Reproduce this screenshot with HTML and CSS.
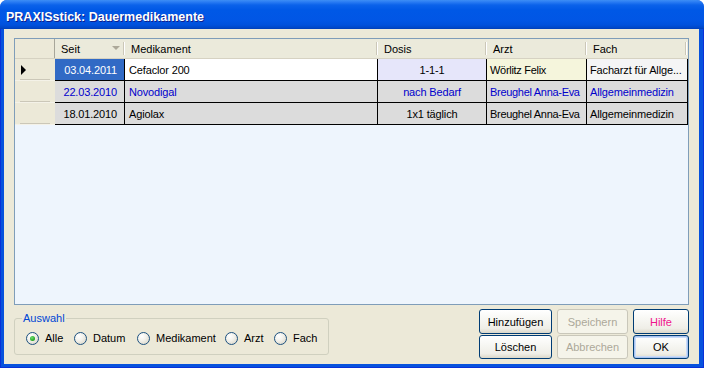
FILE: index.html
```html
<!DOCTYPE html>
<html>
<head>
<meta charset="utf-8">
<link rel="stylesheet" href="styles.css">
</head>
<body>
<div class="window">
  <div class="titlebar">PRAXISstick: Dauermedikamente</div>
  <div class="frame">
    <div class="client">
      <div class="grid">
        <div class="row head">
          <div class="hc corner"></div>
          <div class="hc seit"><span>Seit</span><span class="sort"></span></div>
          <div class="hc">Medikament</div>
          <div class="hc">Dosis</div>
          <div class="hc">Arzt</div>
          <div class="hc last">Fach</div>
        </div>
        <div class="row r1">
          <div class="rh"><span class="pointer"></span></div>
          <div class="c date sel">03.04.2011</div>
          <div class="c med">Cefaclor 200</div>
          <div class="c dose">1-1-1</div>
          <div class="c arzt">Wörlitz Felix</div>
          <div class="c fach">Facharzt für Allge...</div>
        </div>
        <div class="row gray blue">
          <div class="rh"></div>
          <div class="c date">22.03.2010</div>
          <div class="c med">Novodigal</div>
          <div class="c dose">nach Bedarf</div>
          <div class="c arzt">Breughel Anna-Eva</div>
          <div class="c fach">Allgemeinmedizin</div>
        </div>
        <div class="row gray">
          <div class="rh"></div>
          <div class="c date">18.01.2010</div>
          <div class="c med">Agiolax</div>
          <div class="c dose">1x1 täglich</div>
          <div class="c arzt">Breughel Anna-Eva</div>
          <div class="c fach">Allgemeinmedizin</div>
        </div>
      </div>
      <div class="bottom">
        <fieldset class="group">
          <legend>Auswahl</legend>
          <div class="radios">
            <label class="opt"><span class="radio on"></span>Alle</label>
            <label class="opt"><span class="radio"></span>Datum</label>
            <label class="opt"><span class="radio"></span>Medikament</label>
            <label class="opt"><span class="radio"></span>Arzt</label>
            <label class="opt"><span class="radio"></span>Fach</label>
          </div>
        </fieldset>
        <div class="btns">
          <button class="btn">Hinzufügen</button>
          <button class="btn dis">Speichern</button>
          <button class="btn help">Hilfe</button>
          <button class="btn">Löschen</button>
          <button class="btn dis">Abbrechen</button>
          <button class="btn def">OK</button>
        </div>
      </div>
    </div>
  </div>
</div>
</body>
</html>
```
FILE: styles.css
```css
html, body {
  margin: 0;
  padding: 0;
}
body {
  width: 704px;
  height: 368px;
  overflow: hidden;
  background: #ffffff;
  font-family: "Liberation Sans", Arial, sans-serif;
  font-size: 11px;
  color: #000;
}
.window {
  width: 704px;
  height: 368px;
  display: flex;
  flex-direction: column;
  border-radius: 7px 7px 0 0;
  overflow: hidden;
  background: #0a52de;
}
.titlebar {
  height: 29px;
  box-sizing: border-box;
  padding: 7px 0 0 6px;
  line-height: 20px;
  font-size: 12.5px;
  font-weight: bold;
  color: #fff;
  text-shadow: 1px 1px 0 #0f1f8c;
  background: linear-gradient(to bottom, #3d8ef5 0px, #2a7cf3 2px, #0b62ea 5px, #0058e6 10px, #0156e5 20px, #0051dc 25px, #0046c6 28px, #003db4 29px);
}
.frame {
  flex: 1;
  display: flex;
  padding: 0 5px 4px 4px;
  background: #0752dd;
  box-shadow: inset 1px 0 #0831d9, inset -1px 0 #0831d9, inset 0 -1px #0831d9;
}
.client {
  flex: 1;
  display: flex;
  flex-direction: column;
  padding: 9px 10px 0 10px;
  background: #ece9d8;
}
.grid {
  height: 267px;
  box-sizing: border-box;
  border: 1px solid #7f9db9;
  background: #eef5fd;
}
.row {
  display: grid;
  grid-template-columns: 40px 70px 253px 109px 100px 101px;
  height: 22px;
}
.row.head {
  height: 20px;
  background: #ebeadb;
  border-bottom: 1px solid #d6d2c2;
  box-sizing: border-box;
}
.hc {
  box-sizing: border-box;
  padding: 1px 0 0 6px;
  line-height: 18px;
  white-space: nowrap;
  background: linear-gradient(#cbc7b8, #cbc7b8) right 1px top 3px / 1px 13px no-repeat,
              linear-gradient(#ffffff, #ffffff) right 0 top 3px / 1px 13px no-repeat;
}
.hc.corner {
  background: #ece9d8;
  border-right: 1px solid #a7a69a;
}
.hc.seit {
  display: flex;
  justify-content: space-between;
  align-items: center;
  padding-right: 5px;
}
.hc.seit span:first-child {
  line-height: 18px;
}
.sort {
  width: 0;
  height: 0;
  border-left: 4px solid transparent;
  border-right: 4px solid transparent;
  border-top: 4px solid #aca899;
  margin-top: -2px;
}
.hc.last {
  background: linear-gradient(#cbc7b8, #cbc7b8) right 2px top 3px / 1px 13px no-repeat,
              linear-gradient(#ffffff, #ffffff) right 1px top 3px / 1px 13px no-repeat;
}
.rh {
  background: #ece9d8 linear-gradient(#cbc7b8, #cbc7b8) center bottom 1px / 30px 1px no-repeat;
  box-shadow: inset 0 -1px #f4f2e8;
  display: flex;
  align-items: center;
  padding-left: 6px;
}
.pointer {
  width: 0;
  height: 0;
  border-left: 5px solid #000;
  border-top: 5px solid transparent;
  border-bottom: 5px solid transparent;
}
.c {
  box-sizing: border-box;
  border-right: 1px solid #000;
  border-bottom: 1px solid #000;
  padding-top: 2px;
  line-height: 19px;
  white-space: nowrap;
  overflow: hidden;
  letter-spacing: -0.15px;
}
.date {
  text-align: right;
  padding-right: 7px;
}
.med {
  padding-left: 4px;
}
.dose {
  text-align: center;
}
.arzt, .fach {
  padding-left: 3px;
}
.arzt {
  letter-spacing: -0.3px;
}
.r1 .med { background: #ffffff; }
.r1 .sel { background: #316ac5; color: #fff; }
.r1 .dose { background: #e6e6fa; }
.r1 .arzt { background: #f5f5dc; }
.r1 .fach { background: #f5f5f5; }
.gray .c { background: #dcdcdc; }
.blue .c { color: #0000cc; }
.bottom {
  display: flex;
  justify-content: space-between;
  align-items: flex-start;
  margin-top: 4px;
}
.group {
  margin: 3px 0 0 0;
  width: 315px;
  height: 43px;
  box-sizing: border-box;
  border: 1px solid #d0d0bf;
  border-radius: 3px;
  padding: 7px 0 0 11px;
}
.group legend {
  color: #0046d5;
  padding: 0 1px;
  margin-left: -4px;
  line-height: 13px;
}
.radios {
  display: grid;
  grid-template-columns: 48px 63px 88px 49px auto;
  align-items: center;
}
.opt {
  display: flex;
  align-items: center;
  gap: 6px;
  line-height: 13px;
}
.radio {
  width: 13px;
  height: 13px;
  box-sizing: border-box;
  border: 1px solid #1c5180;
  border-radius: 50%;
  background: radial-gradient(circle at 35% 30%, #ffffff 0, #f3f2ec 40%, #d4d0c0 100%);
  display: flex;
  align-items: center;
  justify-content: center;
}
.radio.on::before {
  content: "";
  width: 5px;
  height: 5px;
  border-radius: 50%;
  background: radial-gradient(circle at 40% 35%, #6fe06f, #21a121 70%);
}
.btns {
  display: grid;
  grid-template-columns: 73px 71px 56px;
  grid-template-rows: 25px 24px;
  column-gap: 5px;
  row-gap: 1px;
}
.btn {
  font-family: "Liberation Sans", Arial, sans-serif;
  font-size: 11px;
  color: #000;
  margin: 0;
  padding: 0;
  border: 1px solid #003c74;
  border-radius: 3px;
  background: linear-gradient(to bottom, #ffffff 0%, #f7f7f3 40%, #efeee7 80%, #dcd8c9 100%);
}
.btn.dis {
  border-color: #c9c7ba;
  color: #aca899;
  background: #f5f4ea;
}
.btn.help {
  color: #f0148c;
}
.btn.def {
  box-shadow: inset 0 0 0 1px #a8c3f0, inset 0 0 0 2px #c9dbf8;
}
```
